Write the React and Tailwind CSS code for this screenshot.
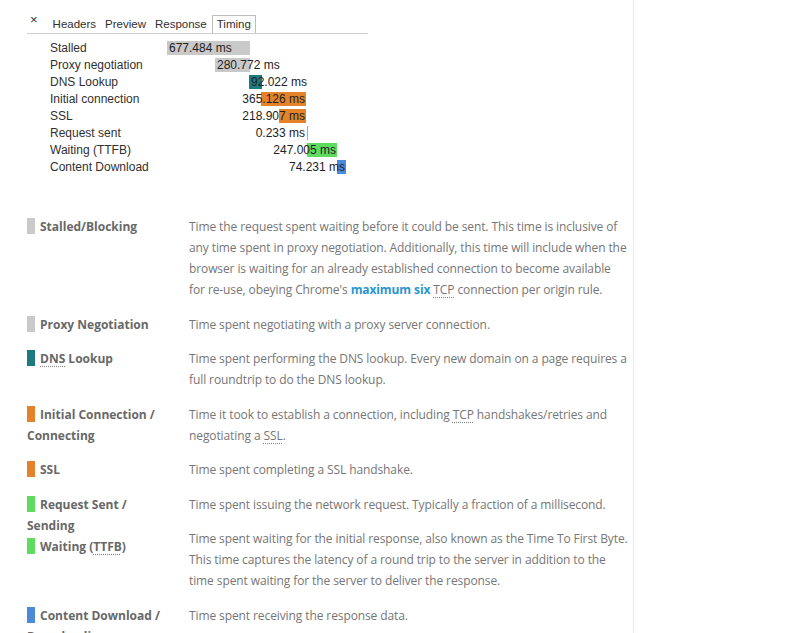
import React from 'react';

const timings = [
  { label: 'Stalled', value: '677.484 ms', bar: 'ml-[0px] w-[83px] bg-[#c9c9c9]', text: 'left-[2px]' },
  { label: 'Proxy negotiation', value: '280.772 ms', bar: 'ml-[48px] w-[35px] bg-[#c9c9c9]', text: 'left-[2px]' },
  { label: 'DNS Lookup', value: '92.022 ms', bar: 'ml-[82px] w-[13px] bg-[#1f7a80]', text: 'left-[2px]' },
  { label: 'Initial connection', value: '365.126 ms', bar: 'ml-[94px] w-[45px] bg-[#e5832a]', text: 'right-[1px]' },
  { label: 'SSL', value: '218.907 ms', bar: 'ml-[112px] w-[27px] bg-[#e5832a]', text: 'right-[1px]' },
  { label: 'Request sent', value: '0.233 ms', bar: 'ml-[140px] w-[1px] bg-[#5fdc5f]', text: 'right-[3px]' },
  { label: 'Waiting (TTFB)', value: '247.005 ms', bar: 'ml-[140px] w-[30px] bg-[#5fdc5f]', text: 'right-[1px]' },
  { label: 'Content Download', value: '74.231 ms', bar: 'ml-[170px] w-[9px] bg-[#4a8ad8]', text: 'right-[1px]' },
];

const Abbr = ({ children }) => (
  <span className="underline decoration-dotted decoration-[#888] underline-offset-[3px]">{children}</span>
);

const Swatch = ({ color }) => (
  <span className={`inline-block w-[8px] h-[16px] mr-[5px] align-[-3px] ${color}`} />
);

const terms = [
  {
    color: 'bg-[#c9c9c9]',
    term: 'Stalled/Blocking',
    desc: (
      <>
        Time the request spent waiting before it could be sent. This time is inclusive of any time spent in proxy
        negotiation. Additionally, this time will include when the browser is waiting for an already established
        connection to become available for re-use, obeying Chrome's{' '}
        <span className="font-bold text-[#2b95d0]">maximum six</span> <Abbr>TCP</Abbr> connection per origin rule.
      </>
    ),
  },
  { color: 'bg-[#c9c9c9]', term: 'Proxy Negotiation', desc: 'Time spent negotiating with a proxy server connection.' },
  {
    color: 'bg-[#1f7a80]',
    term: (
      <>
        <Abbr>DNS</Abbr> Lookup
      </>
    ),
    desc: 'Time spent performing the DNS lookup. Every new domain on a page requires a full roundtrip to do the DNS lookup.',
  },
  {
    color: 'bg-[#e5832a]',
    term: 'Initial Connection / Connecting',
    desc: (
      <>
        Time it took to establish a connection, including <Abbr>TCP</Abbr> handshakes/retries and negotiating a{' '}
        <Abbr>SSL</Abbr>.
      </>
    ),
  },
  { color: 'bg-[#e5832a]', term: 'SSL', desc: 'Time spent completing a SSL handshake.' },
  {
    color: 'bg-[#5fdc5f]',
    term: 'Request Sent / Sending',
    desc: 'Time spent issuing the network request. Typically a fraction of a millisecond.',
  },
  {
    color: 'bg-[#5fdc5f]',
    term: (
      <>
        Waiting (<Abbr>TTFB</Abbr>)
      </>
    ),
    desc: 'Time spent waiting for the initial response, also known as the Time To First Byte. This time captures the latency of a round trip to the server in addition to the time spent waiting for the server to deliver the response.',
  },
  {
    color: 'bg-[#4a8ad8]',
    term: 'Content Download / Downloading',
    desc: 'Time spent receiving the response data.',
  },
];

export default function App() {
  return (
    <div className="h-[633px] overflow-hidden bg-white">
      <div className="w-[634px] min-h-[633px] border-r border-[#ececec] pl-[27px]">
        {/* devtools timing panel */}
        <div className="w-[341px] pt-[15px] font-['Liberation_Sans',Arial,sans-serif] text-[12px] text-[#303030]">
          <div className="flex items-end h-[19px] border-b border-[#cfcfcf] text-[11.5px] leading-[16px]">
            <span className="ml-[3px] mr-[12px] mb-[7px] text-[13px] leading-none text-[#333]">×</span>
            <span className="px-[3px] pb-[1px]">Headers</span>
            <span className="ml-[3px] px-[3px] pb-[1px]">Preview</span>
            <span className="ml-[3px] px-[3px] pb-[1px]">Response</span>
            <span className="ml-[2px] px-[4px] pb-[1px] border border-b-0 border-[#bdbdbd] bg-white">Timing</span>
          </div>
          <div className="pt-[5px]">
            {timings.map((t) => (
              <div key={t.label} className="flex items-center h-[17px]">
                <span className="w-[140px] pl-[23px] whitespace-nowrap">{t.label}</span>
                <div className="flex-1 flex items-center">
                  <div className={`relative h-[14px] ${t.bar}`}>
                    <span className={`absolute top-0 leading-[14px] whitespace-nowrap text-[#222] ${t.text}`}>
                      {t.value}
                    </span>
                  </div>
                </div>
              </div>
            ))}
          </div>
        </div>

        {/* definitions */}
        <dl className="mt-[41px] font-['Open_Sans',sans-serif] text-[12px] leading-[21px] text-[#767676]">
          {terms.map((t, i) => (
            <React.Fragment key={i}>
              <dt className="float-left clear-left w-[162px] pr-[22px] font-bold text-[#686868]">
                <Swatch color={t.color} />
                {t.term}
              </dt>
              <dd className="ml-[162px] mr-[5px] mb-[13.5px] tracking-[-0.1px]">{t.desc}</dd>
            </React.Fragment>
          ))}
        </dl>
      </div>
    </div>
  );
}
